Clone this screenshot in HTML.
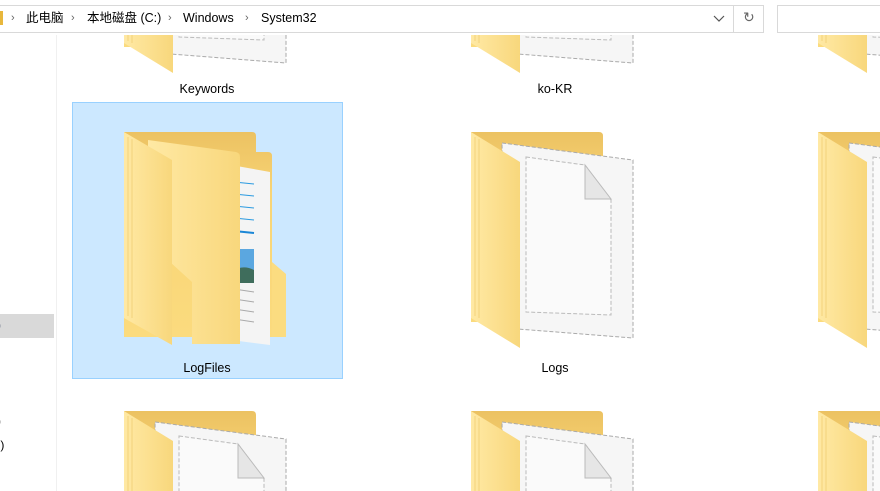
<!DOCTYPE html>
<html><head><meta charset="utf-8"><style>
html,body{margin:0;width:880px;height:491px;overflow:hidden;background:#fff;font-family:"Liberation Sans","Noto Sans CJK SC",sans-serif;position:relative}
.hdr{position:absolute;left:0;top:0;width:880px;height:35px;background:#fff;z-index:2}
.addr{position:absolute;left:-1px;top:5px;width:765px;height:28px;border:1px solid #d9d9d9;box-sizing:border-box}
.search{position:absolute;left:777px;top:5px;width:120px;height:28px;border:1px solid #d9d9d9;box-sizing:border-box}
.bc{position:absolute;top:9px;height:18px;line-height:18px;font-size:12.5px;white-space:nowrap}
.bc span{position:absolute;top:0}
.sep{color:#666;font-size:11px}
.lbl{position:absolute;font-size:12.5px;color:#000;text-align:center;width:200px}
.sel{position:absolute;left:72px;top:102px;width:271px;height:277px;background:#cce8ff;border:1px solid #99d1ff;box-sizing:border-box}
</style></head><body>
<div class="sel"></div>
<svg width="880" height="491" style="position:absolute;left:0;top:0;display:block">
<defs>
<linearGradient id="fl" x1="0" x2="1"><stop offset="0" stop-color="#ffe9a4"/><stop offset="1" stop-color="#f8d77c"/></linearGradient>
<linearGradient id="bk" x1="0" y1="0" x2="0" y2="1"><stop offset="0" stop-color="#ecc262"/><stop offset="0.3" stop-color="#f8d475"/><stop offset="1" stop-color="#fbdb7e"/></linearGradient>
<g id="logs">
<path d="M0 0 H128 q4 0 4 4 V190 H0 Z" fill="url(#bk)"/>
<path d="M31 11 L162 28 V206 L34 196 Z" fill="#f6f6f6" stroke="#aaa" stroke-dasharray="4 2"/>
<path d="M55 25 L114 33 L140 68 V183 L55 180 Z" fill="#fafafa" stroke="#bbb" stroke-dasharray="4 2"/>
<path d="M114 33 V67 H140 Z" fill="#e6e6e6" stroke="#bbb"/>
<path d="M0 0 L49 30 V216 L0 186 Z" fill="url(#fl)"/>
<path d="M4 5 V184 M8 7 V186" stroke="#f3d27c" stroke-width="1"/>
</g>
</defs>
<g transform="translate(124,132)">
<path d="M0 0 H128 q4 0 4 4 V20 H144 q4 0 4 4 V205 H0 Z" fill="url(#bk)"/>
<path d="M107 33 L146 40 V213 L107 208 Z" fill="#f4f4f4"/>
<path d="M110 50 L130 52 M110 62 L130 64 M110 74 L130 76 M110 86 L130 88" stroke="#2a9ae0"/>
<path d="M110 99 L130 101" stroke="#1a86d6" stroke-width="2"/>
<rect x="108" y="117" width="22" height="34" fill="#5ba7e0"/><path d="M108 140 Q118 132 130 138 V151 H108Z" fill="#3f6d5c"/>
<path d="M110 157 L130 160 M110 167 L130 170 M110 177 L130 180 M110 187 L130 190" stroke="#aaa"/>
<path d="M148 130 L162 142 V205 L148 205 Z" fill="#fbdc80"/>
<path d="M24 8 L112 20 q4 1 4 5 V212 L68 212 V150 L24 110 Z" fill="url(#fl)"/>
<path d="M0 0 L48 28 V213 L0 186 Z" fill="url(#fl)"/>
<path d="M4 5 V184 M8 7 V186" stroke="#f3d27c"/>
</g>
<use href="#logs" transform="translate(471,132)"/>
<use href="#logs" transform="translate(818,132)"/>
<use href="#logs" transform="translate(124,411)"/>
<use href="#logs" transform="translate(471,411)"/>
<use href="#logs" transform="translate(818,411)"/>
<use href="#logs" transform="translate(124,-143)"/>
<use href="#logs" transform="translate(471,-143)"/>
<use href="#logs" transform="translate(818,-143)"/>
</svg>
<div class="hdr">
<div class="addr"></div>
<div style="position:absolute;left:733px;top:6px;width:1px;height:26px;background:#d9d9d9"></div>
<div class="search"></div>
<div style="position:absolute;left:0;top:11px;width:3px;height:14px;background:#e8b73c"></div>
<div class="bc" style="left:0;width:400px">
<span class="sep" style="left:11px">›</span>
<span style="left:26px">此电脑</span>
<span class="sep" style="left:71px">›</span>
<span style="left:87px">本地磁盘 (C:)</span>
<span class="sep" style="left:168px">›</span>
<span style="left:183px">Windows</span>
<span class="sep" style="left:245px">›</span>
<span style="left:261px">System32</span>
</div>
<svg style="position:absolute;left:713px;top:15px" width="12" height="8"><path d="M1 1 L6 6 L11 1" fill="none" stroke="#555" stroke-width="1.2"/></svg>
<span style="position:absolute;left:743px;top:9px;font-size:14px;color:#666">↻</span>
</div>
<div style="position:absolute;left:56px;top:34px;width:1px;height:457px;background:#f0f0f0"></div>
<div style="position:absolute;left:0;top:314px;width:54px;height:24px;background:#d9d9d9"></div>
<span style="position:absolute;left:-3px;top:318px;font-size:12px;line-height:14px;color:#235">)</span>
<span style="position:absolute;left:-3px;top:414px;font-size:12px;line-height:14px">)</span>
<span style="position:absolute;left:-3px;top:438px;font-size:12px;line-height:14px">:)</span>
<div class="lbl" style="left:107px;top:82px">Keywords</div>
<div class="lbl" style="left:455px;top:82px">ko-KR</div>
<div class="lbl" style="left:107px;top:361px">LogFiles</div>
<div class="lbl" style="left:455px;top:361px">Logs</div>
</body></html>
